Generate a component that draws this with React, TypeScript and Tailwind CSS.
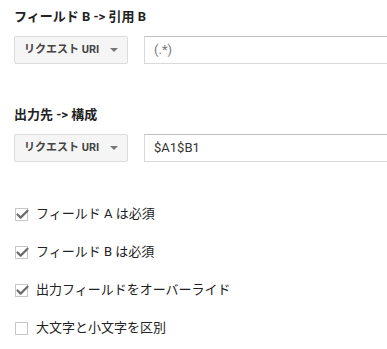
import { Check } from 'lucide-react';

const font = { fontFamily: 'Roboto, "Noto Sans CJK JP", sans-serif' };

function Section({ title, value, muted }: { title: string; value: string; muted?: boolean }) {
  return (
    <div className="flex flex-col">
      <div className="h-5 leading-5 text-[13px] font-bold text-[#222]">{title}</div>
      <div className="mt-[9px] flex items-center gap-4">
        {/* select */}
        <div className="w-[114px] h-[28px] shrink-0 flex items-center justify-between pl-[9px] pr-[9px] bg-[#f5f5f5] border border-[#dcdcdc] rounded-[2px]">
          <span className="text-[11px] font-bold text-[#444]">リクエスト URI</span>
          <span className="w-0 h-0 border-l-[4px] border-r-[4px] border-t-[4px] border-l-transparent border-r-transparent border-t-[#777]" />
        </div>
        {/* input */}
        <div className="w-[260px] h-[28px] shrink-0 flex items-center pl-[9px] bg-white border border-[#d9d9d9] border-t-[#c0c0c0]">
          <span className={`text-[13px] ${muted ? 'text-[#777]' : 'text-[#333]'}`}>{value}</span>
        </div>
      </div>
    </div>
  );
}

function CheckRow({ label, checked }: { label: string; checked: boolean }) {
  return (
    <div className="h-[38px] flex items-center gap-2">
      <div className="relative w-[13px] h-[13px] border border-[#c6c6c6] bg-white">
        {checked && (
          <Check size={15} strokeWidth={3.5} className="absolute -left-[1px] -top-[2px] text-[#6b6b6b]" />
        )}
      </div>
      <span className="text-[13px] text-[#222]">{label}</span>
    </div>
  );
}

export default function App() {
  return (
    <div className="w-full h-[349px] overflow-hidden bg-white pl-[14px] pt-[7px]" style={font}>
      <Section title="フィールド B -> 引用 B" value="(.*)" muted />
      <div className="mt-[41px]">
        <Section title="出力先 -> 構成" value="$A1$B1" />
      </div>
      <div className="mt-[33px] pl-[1px] flex flex-col">
        <CheckRow label="フィールド A は必須" checked />
        <CheckRow label="フィールド B は必須" checked />
        <CheckRow label="出力フィールドをオーバーライド" checked />
        <CheckRow label="大文字と小文字を区別" checked={false} />
      </div>
    </div>
  );
}
